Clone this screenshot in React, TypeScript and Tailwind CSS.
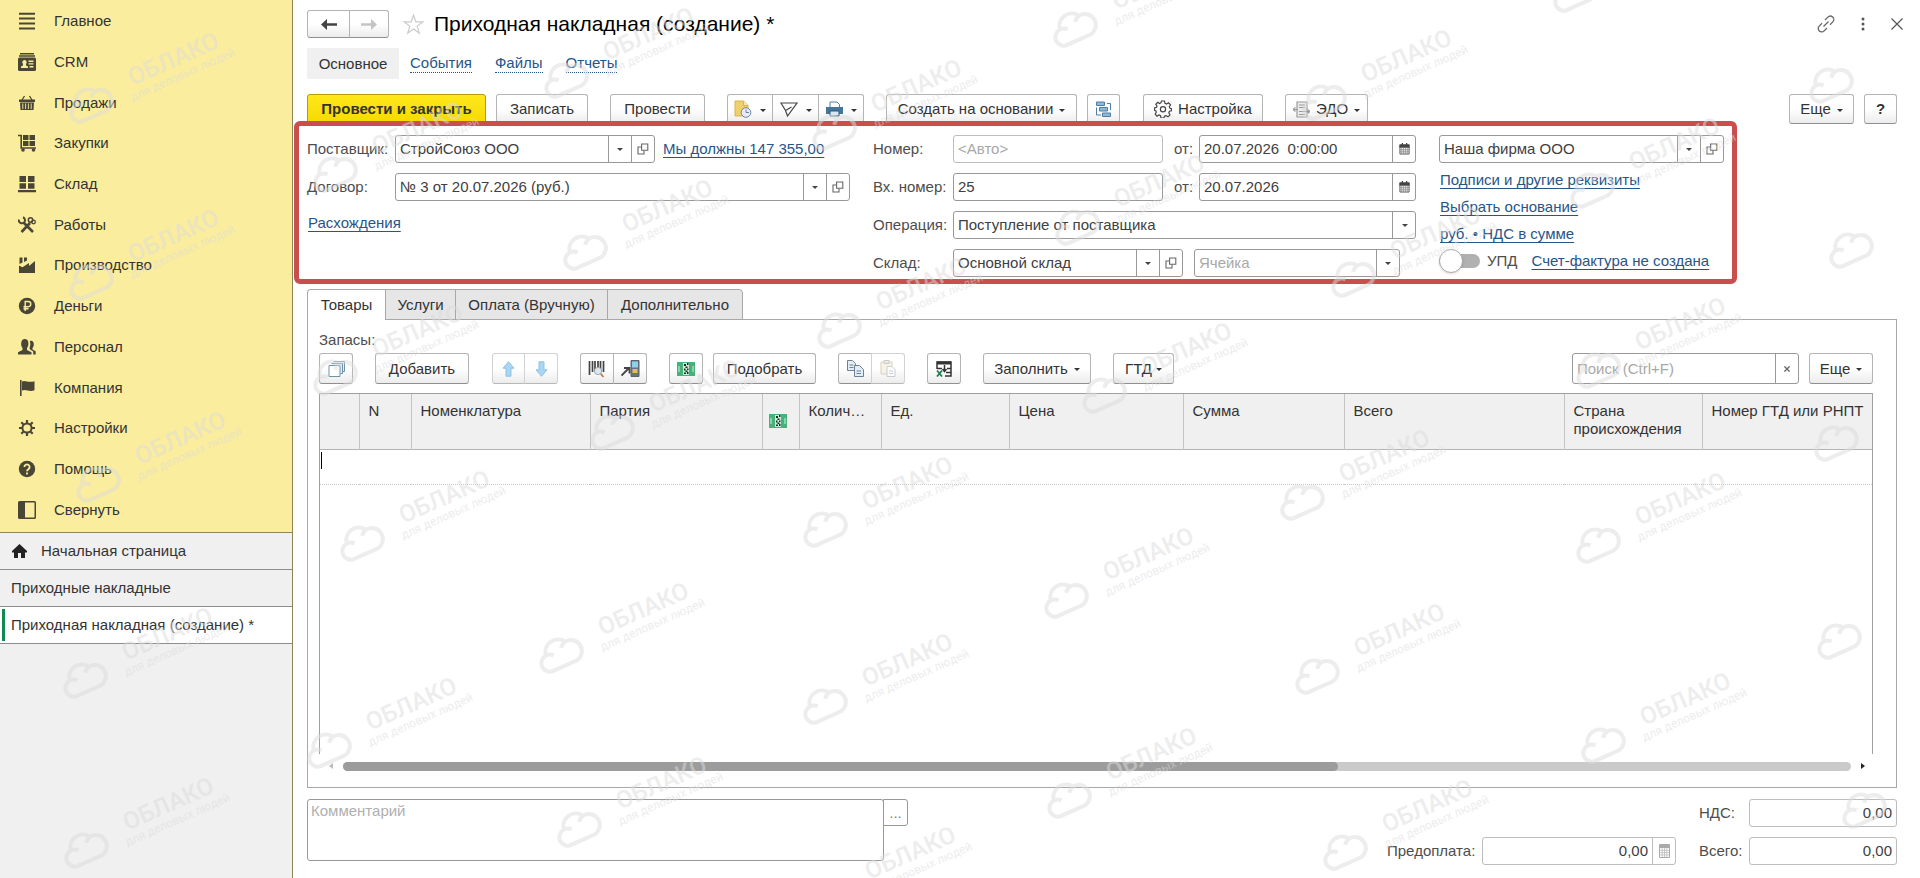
import type { ReactNode } from "react";
import clsx from "clsx";

// ---------- Icons ----------

const Caret = ({ className }: { className?: string }) => (
  <svg width="6" height="3" viewBox="0 0 6 3" className={clsx("shrink-0", className)}>
    <path d="M0 0h6L3 3z" fill="currentColor" />
  </svg>
);

const OpenIcon = () => (
  <svg width="12" height="12" viewBox="0 0 12 12" fill="none" stroke="#666" strokeWidth="1.1">
    <path d="M4.6 1h6.2v6.2H4.6z" />
    <path d="M4.4 4H1v7h6V7.4" />
  </svg>
);

const CalendarIcon = () => (
  <svg width="11" height="12" viewBox="0 0 12 13">
    <path d="M1 2h10v10H1z" fill="#fff" stroke="#555" />
    <path d="M.5 1.5h11V5H.5zM3 0h1.4v2H3zM7.6 0H9v2H7.6z" fill="#444" />
    <path d="M3 5v7M5 5v7M7 5v7M9 5v7M1 7.3h10M1 9.6h10" stroke="#777" strokeWidth=".7" />
  </svg>
);

const CalculatorIcon = () => (
  <svg width="11" height="14" viewBox="0 0 11 14">
    <path d="M.5.5h10v13H.5z" fill="#fff" stroke="#aaa" />
    <path d="M1 1h9v3H1z" fill="#aaa" />
    <path d="M3.2 4v9M5.5 4v9M7.8 4v9M1 6.3h9M1 8.6h9M1 10.9h9" stroke="#bbb" strokeWidth=".8" />
  </svg>
);

const MarkIcon = () => (
  <svg width="18" height="14" viewBox="0 0 18 14">
    <path d="M0 0h18v14H0z" fill="#45b27b" />
    <path d="M2 4v6M16 4v6" stroke="#9be0bd" strokeWidth="1.5" />
    <path d="M6 1h6v12H6z" fill="#c9ecd9" />
    <path
      d="M7 2h2v2H7zM10 1h1.5v2H10zM8.500 4.500h2v1.500h-2zM7 6.500h1.500v2H7zM10 6.500h1.500v1.500H10zM8.500 8.500h2v1.500h-2zM7 10.500h2V12H7zM10 10h1.500v2H10z"
      fill="#12301f"
    />
  </svg>
);

const menuIcons: Record<string, ReactNode> = {
  main: <path d="M1 1.700h16M1 6.600h16M1 11.500h16M1 16.400h16" stroke="currentColor" strokeWidth="2" />,
  crm: (
    <>
      <path d="M2 .8h14M1 3h16" stroke="currentColor" strokeWidth="1.400" />
      <rect y="4.500" width="18" height="13.500" rx="1.500" />
      <path
        d="M3 15v-1.500l2-1V11a2.200 2.200 0 1 1 3 0v1.500l2 1V15zM10.500 7.500h5v1.400h-5zM10.500 10.200h5v1.400h-5zM11.500 13h4v1.400h-4z"
        fill="#fbed9e"
      />
    </>
  ),
  sales: (
    <>
      <path d="M4 6 6.500 2M14 6l-2.500-4" stroke="currentColor" strokeWidth="1.300" />
      <path d="M1 5.500h16V8H1zM2 8.500h14L15.500 16h-13z" />
      <path d="M4.800 9.500v5.500M7.600 9.500v5.500M10.400 9.500v5.500M13.200 9.500v5.500" stroke="#fbed9e" strokeWidth=".9" />
    </>
  ),
  purchases: (
    <>
      <path d="M0 1.500h3.200V14H18" fill="none" stroke="currentColor" strokeWidth="1.600" />
      <path d="M5 1h5.500v5H5zM11.500 1H17v5h-5.500zM5 7h5.500v5H5zM11.500 7H17v5h-5.500z" />
      <circle cx="5" cy="16" r="1.800" />
      <circle cx="15.500" cy="16" r="1.800" />
    </>
  ),
  stock: <path d="M1.500 1H8v6H1.500zM10 1h6.500v6H10zM1.500 8.200H8v5.600H1.500zM10 8.200h6.500v5.600H10zM0 15h18v2.200H0z" />,
  works: (
    <>
      <path d="M5.500 6.500 15 16M12 7 3.500 16" stroke="currentColor" strokeWidth="2.600" />
      <path d="M.8 3.500a3.200 3.200 0 0 0 5.200 3 3.200 3.200 0 0 0-1-5.300" fill="none" stroke="currentColor" strokeWidth="2" />
      <circle cx="12.500" cy="4" r="2.200" fill="none" stroke="currentColor" strokeWidth="1.500" />
      <circle cx="15.500" cy="6" r="1.800" fill="none" stroke="currentColor" strokeWidth="1.300" />
    </>
  ),
  production: <path d="M1 17V9.500l3.500 1.800L11 7v3l6-5v12zM1.500 1.500h3v5l-3 1.500zM6 1.500h3v3L6 6z" />,
  money: (
    <>
      <circle cx="9" cy="9" r="8.200" />
      <path d="M7.200 14V4.500h3a2.500 2.500 0 0 1 0 5.200H5.500M5.500 11.800h5" fill="none" stroke="#fbed9e" strokeWidth="1.400" />
    </>
  ),
  staff: (
    <>
      <path d="M0 16.500v-2.300l4.500-2.200V10C3.200 8.500 3 6.500 3.300 4.200 3.700 2 5 1 6.800 1s3.200 1 3.500 3.200c.3 2.300 0 4.300-1.300 5.800v2l4.500 2.200v2.300z" />
      <path d="M11.800 3c2.400-.7 4 .6 4 3.200 0 1.700-.5 3-1.300 3.800v1.500l3.200 1.700v3.300h-2.500v-3l-3.500-2.300V9.200c.8-1.800.9-4 .1-6.200z" />
    </>
  ),
  company: <path d="M2 1h1.600v16H2zM4 2.500c3-2 6 1.800 12.500-.3v9C11 13.500 8 9.500 4 11.500z" />,
  settings: (
    <>
      <circle cx="9" cy="9" r="4.600" fill="none" stroke="currentColor" strokeWidth="2" />
      <path
        d="M9 1v3M9 14v3M1 9h3M14 9h3M3.300 3.300l2 2M12.700 12.700l2 2M3.300 14.700l2-2M12.700 5.300l2-2"
        stroke="currentColor"
        strokeWidth="2.200"
      />
    </>
  ),
  help: (
    <>
      <circle cx="9" cy="9" r="8.200" />
      <path d="M6.400 7a2.600 2.600 0 1 1 4 2.200c-1 .7-1.400 1-1.400 2M9 12.600v1.800" fill="none" stroke="#fbed9e" strokeWidth="1.800" />
    </>
  ),
  collapse: <path d="M1.500 0h15A1.500 1.500 0 0 1 18 1.500v15a1.500 1.500 0 0 1-1.500 1.500h-15A1.500 1.500 0 0 1 0 16.500v-15A1.500 1.500 0 0 1 1.500 0zM7 1.500v15h9.500v-15z" />,
};

// ---------- Data ----------

const menu = [
  { icon: "main", title: "Главное" },
  { icon: "crm", title: "CRM" },
  { icon: "sales", title: "Продажи" },
  { icon: "purchases", title: "Закупки" },
  { icon: "stock", title: "Склад" },
  { icon: "works", title: "Работы" },
  { icon: "production", title: "Производство" },
  { icon: "money", title: "Деньги" },
  { icon: "staff", title: "Персонал" },
  { icon: "company", title: "Компания" },
  { icon: "settings", title: "Настройки" },
  { icon: "help", title: "Помощь" },
  { icon: "collapse", title: "Свернуть" },
];

const columns: { title: ReactNode; width: string }[] = [
  { title: "", width: "w-[39px]" },
  { title: "N", width: "w-[52px]" },
  { title: "Номенклатура", width: "w-[179px]" },
  { title: "Партия", width: "w-[172px]" },
  { title: <MarkIcon />, width: "w-[37px]" },
  { title: "Колич…", width: "w-[82px]" },
  { title: "Ед.", width: "w-[128px]" },
  { title: "Цена", width: "w-[174px]" },
  { title: "Сумма", width: "w-[161px]" },
  { title: "Всего", width: "w-[220px]" },
  { title: "Страна происхождения", width: "w-[138px]" },
  { title: "Номер ГТД или РНПТ", width: "w-auto" },
];

// centre of the cloud; the ones at the right edge come without the text
const stamps: { x: number; y: number; bare?: boolean }[] = [
  { x: 89, y: 103 },
  { x: 89, y: 280 },
  { x: 96, y: 482 },
  { x: 83, y: 678 },
  { x: 84, y: 848 },
  { x: 564, y: 78 },
  { x: 832, y: 130 },
  { x: 1073, y: 27 },
  { x: 1322, y: 100 },
  { x: 1573, y: -8 },
  { x: 333, y: 172 },
  { x: 583, y: 250 },
  { x: 1075, y: 225 },
  { x: 1351, y: 277 },
  { x: 1590, y: 188 },
  { x: 333, y: 375 },
  { x: 610, y: 430 },
  { x: 837, y: 328 },
  { x: 1102, y: 393 },
  { x: 1300, y: 500 },
  { x: 1596, y: 368 },
  { x: 1596, y: 543 },
  { x: 360, y: 541 },
  { x: 823, y: 527 },
  { x: 1064, y: 598 },
  { x: 559, y: 653 },
  { x: 1315, y: 674 },
  { x: 823, y: 704 },
  { x: 327, y: 748 },
  { x: 1067, y: 798 },
  { x: 1601, y: 743 },
  { x: 577, y: 827 },
  { x: 1343, y: 850 },
  { x: 826, y: 897 },
  { x: 1829, y: 83, bare: true },
  { x: 1849, y: 248, bare: true },
  { x: 1834, y: 441, bare: true },
  { x: 1837, y: 639, bare: true },
  { x: 1862, y: 808, bare: true },
];

// ---------- Controls ----------

const buttonBase =
  "flex items-center justify-center gap-1 border border-[#b4b4b4] border-b-[#8f8f8f] bg-linear-to-b from-white from-50% to-[#ececec] text-[#333] whitespace-nowrap";

type ButtonProps = {
  children: ReactNode;
  className?: string;
  label?: string;
  caret?: boolean;
  disabled?: boolean;
};

const Button = ({ children, className, label, caret, disabled }: ButtonProps) => (
  <button
    type="button"
    aria-label={label}
    disabled={disabled}
    className={clsx(buttonBase, !className?.includes("rounded") && "rounded-[3px]", className)}
  >
    {children}
    {caret && <Caret className="mt-0.5" />}
  </button>
);

const Link = ({ children, className }: { children: ReactNode; className?: string }) => (
  <a href="#" className={clsx("whitespace-nowrap text-[#27558a] underline underline-offset-3", className)}>
    {children}
  </a>
);

type FieldProps = {
  id: string;
  label: string;
  value?: string;
  placeholder?: string;
  className?: string;
  muted?: boolean;
  right?: boolean;
  buttons?: ("drop" | "open" | "date" | "calc")[];
};

const fieldIcons = {
  drop: { label: "Выбрать", icon: <Caret className="text-[#444]" /> },
  open: { label: "Открыть", icon: <OpenIcon /> },
  date: { label: "Календарь", icon: <CalendarIcon /> },
  calc: { label: "Калькулятор", icon: <CalculatorIcon /> },
};

// Input with small buttons glued to its right side
const Field = ({ id, label, value, placeholder, className, muted, right, buttons = [] }: FieldProps) => (
  <div
    className={clsx(
      "flex h-7 overflow-hidden rounded-[3px] border bg-white",
      muted ? "border-[#bdbdbd]" : "border-[#999]",
      className
    )}
  >
    <input
      id={id}
      aria-label={label}
      defaultValue={value}
      placeholder={placeholder}
      className={clsx("w-0 min-w-0 flex-1 px-1 text-[#404040] outline-none placeholder:text-[#a8a8a8]", right && "text-right")}
    />
    {buttons.map((b) => (
      <button
        key={b}
        type="button"
        aria-label={fieldIcons[b].label}
        className={clsx(
          "flex w-[23px] shrink-0 items-center justify-center border-l",
          muted ? "border-[#bdbdbd]" : "border-[#999]"
        )}
      >
        {fieldIcons[b].icon}
      </button>
    ))}
  </div>
);

const Label = ({ htmlFor, children, className }: { htmlFor: string; children: ReactNode; className?: string }) => (
  <label htmlFor={htmlFor} className={clsx("shrink-0 whitespace-nowrap text-[#4d4d4d]", className)}>
    {children}
  </label>
);

// ---------- Sections ----------

const Sidebar = () => (
  <aside className="flex w-[293px] shrink-0 flex-col border-r border-[#8d8659] bg-[#f0f0f0] text-[#333]">
    <nav className="grid h-[533px] auto-rows-fr border-b border-[#8d8659] bg-[#fbed9e] pt-px pb-0.5">
      {menu.map((item) => (
        <a key={item.icon} href="#" className="flex items-center gap-[18px] pl-[18px]">
          <svg width="18" height="18" viewBox="0 0 18 18" fill="currentColor" className="text-[#4a4635]">
            {menuIcons[item.icon]}
          </svg>
          {item.title}
        </a>
      ))}
    </nav>
    <a href="#" className="flex h-[37px] items-center gap-3.5 border-b border-[#8d8d8d] pl-3">
      <svg width="15" height="14" viewBox="0 0 15 14" fill="#222">
        <path d="M7.500 0 15 7v1.500h-2V14H9V9H6v5H2V8.500H0V7z" />
      </svg>
      Начальная страница
    </a>
    <a href="#" className="flex h-[37px] items-center border-b border-[#8d8d8d] pl-[11px]">
      Приходные накладные
    </a>
    <a href="#" className="flex h-[37px] items-center border-b border-[#8d8d8d] bg-white py-0.5 pl-0.5">
      <span className="mr-1.5 h-full w-[3px] bg-[#0f8a51]" />
      Приходная накладная (создание) *
    </a>
  </aside>
);

const TitleBar = () => (
  <div className="flex items-center pt-2.5">
    <Button label="Назад" className="h-7 w-[43px] rounded-l-[3px]">
      <svg width="16" height="11" viewBox="0 0 16 11">
        <path d="M0 5.500 6 0v4.200h10v2.600H6V11z" fill="#444" />
      </svg>
    </Button>
    <Button label="Вперед" className="-ml-px h-7 w-10 rounded-r-[3px]" disabled>
      <svg width="16" height="11" viewBox="0 0 16 11">
        <path d="M16 5.500 10 0v4.200H0v2.600h10V11z" fill="#c4c4c4" />
      </svg>
    </Button>
    <button type="button" aria-label="В избранное" className="ml-3.5">
      <svg width="21" height="21" viewBox="0 0 21 21" fill="none" stroke="#ccc" strokeWidth="1.200">
        <path d="m10.500 1 2.300 6.800h7l-5.600 4.300 2.100 7-5.800-4.200-5.800 4.200 2.100-7L1.200 7.800h7z" />
      </svg>
    </button>
    <h1 className="ml-2.5 text-[21px] leading-7 text-black">Приходная накладная (создание) *</h1>
    <div className="-mr-1.5 ml-auto flex items-center gap-[22px]">
      <button type="button" aria-label="Получить ссылку">
        <svg width="18" height="18" viewBox="0 0 18 18" fill="none" stroke="#666" strokeWidth="1.300">
          <path d="m8 5 2.800-2.900a3.400 3.400 0 0 1 5 4.800L13 9.800M10 13l-2.800 2.900a3.400 3.400 0 0 1-5-4.800L5 8.200M6.500 11.500l5-5" />
        </svg>
      </button>
      <button type="button" aria-label="Дополнительно" className="px-1">
        <svg width="4" height="14" viewBox="0 0 4 14" fill="#555">
          <circle cx="2" cy="2" r="1.500" />
          <circle cx="2" cy="7" r="1.500" />
          <circle cx="2" cy="12" r="1.500" />
        </svg>
      </button>
      <button type="button" aria-label="Закрыть">
        <svg width="12" height="12" viewBox="0 0 12 12" stroke="#555" strokeWidth="1.200">
          <path d="m.5.5 11 11M11.500.5l-11 11" />
        </svg>
      </button>
    </div>
  </div>
);

const CommandBar = () => (
  <div className="mt-[15px] flex h-[30px] items-stretch">
    <button
      type="button"
      className="w-[179px] rounded-[3px] border border-[#b89b00] bg-linear-to-b from-[#ffe81a] to-[#f7d900] font-bold whitespace-nowrap text-[#333]"
    >
      Провести и закрыть
    </button>
    <Button className="ml-2.5 w-[92px]">Записать</Button>
    <Button className="ml-[22px] w-[95px]">Провести</Button>
    <div className="ml-[22px] flex">
      <Button label="Присоединенные файлы" className="w-[46px] gap-2 rounded-l-[3px]" caret>
        <svg width="18" height="18" viewBox="0 0 18 18">
          <path d="M1 1h8.500L14 5.500V16H1z" fill="#f0cf6e" stroke="#d9b44a" />
          <path d="M9.500 1v4.500H14" fill="#fbe9b0" stroke="#d9b44a" />
          <circle cx="12" cy="12.500" r="4.800" fill="#e8edf5" stroke="#6f83a5" />
          <path d="M12 9.500v3h3" fill="none" stroke="#6f83a5" />
        </svg>
      </Button>
      <Button label="Отправить" className="-ml-px w-[47px] gap-2 rounded-none" caret>
        <svg width="18" height="15" viewBox="0 0 18 15" fill="none" stroke="#444" strokeWidth="1.200">
          <path d="M1 1h16L7.500 14 5.500 8.500zM5.500 8.500 11.500 5" />
        </svg>
      </Button>
      <Button label="Печать" className="-ml-px w-[46px] gap-2 rounded-r-[3px]" caret>
        <svg width="17" height="16" viewBox="0 0 17 16">
          <path d="M4 6V1h7l2.500 2.500V6" fill="#fff" stroke="#4d7ea3" />
          <path d="M0 6h17v7H0z" fill="#44759b" />
          <path d="M4 10h9v5H4z" fill="#dbe8f1" stroke="#2f5878" />
        </svg>
      </Button>
    </div>
    <Button className="ml-[22px] w-[191px] gap-1.5" caret>
      Создать на основании
    </Button>
    <Button label="Структура подчиненности" className="ml-2.5 w-[33px]">
      <svg width="17" height="17" viewBox="0 0 17 17" fill="#8fb8d8" stroke="#4d7ea3">
        <path d="M1.500 1h8v3.500h-8zM4.500 6.500h8V10h-8zM7.500 12h8v3.500h-8z" />
        <path d="M12 2.500h3.500V9M1.500 6.500v7.500H6" fill="none" />
      </svg>
    </Button>
    <Button className="ml-[23px] w-[120px] gap-1.5">
      <svg width="18" height="18" viewBox="0 0 18 18" fill="none" stroke="#444" strokeWidth="1.200">
        <path d="M7.500 1h3l.5 2.300 1.500.7 2-1.200 2 2-1.200 2 .7 1.500 1.500.4v2l-2 .6-.7 1.500 1.200 2-2 2-2-1.200-1.500.6-.5 1.800h-3L6.500 15.700 5 15l-2 1.200-1.800-2L2.300 12l-.6-1.300-1.200-.4V8l1.800-.6L3 6 1.800 4.300l2-2L5.500 3.500l1.400-.6z" />
        <circle cx="9" cy="9.200" r="2.600" />
      </svg>
      Настройка
    </Button>
    <Button className="ml-[22px] w-[83px] gap-1.5" caret>
      <svg width="17" height="17" viewBox="0 0 17 17" stroke="#9a9a9a" strokeWidth="1.200">
        <path d="M4 1h10v15H4z" fill="#ececec" />
        <path d="M6 4h6M6 6.500h6M6 13.500h6M0 8.500h5M0 8.500 2.500 6.500M0 8.500l2.500 2M17 10.500H6M17 10.500l-2.500-2M17 10.500l-2.500 2" fill="none" />
      </svg>
      ЭДО
    </Button>
    <Button className="ml-auto w-[65px] gap-1.5" caret>
      Еще
    </Button>
    <Button label="Справка" className="ml-2.5 w-[33px] font-bold">
      ?
    </Button>
  </div>
);

const DocumentHeader = () => (
  <section className="relative -mt-[3px] -ml-[13px] flex w-fit gap-[23px] rounded-md border-[5px] border-[#c94f4f] pt-[9px] pr-2 pb-0.5 pl-2">
    <div className="flex w-[543px] flex-col gap-2.5">
      <div className="flex items-center">
        <Label htmlFor="supplier" className="w-[88px]">Поставщик:</Label>
        <Field id="supplier" label="Поставщик" value="СтройСоюз ООО" className="w-[260px]" buttons={["drop", "open"]} />
        <Link className="ml-2">Мы должны 147 355,00</Link>
      </div>
      <div className="flex items-center">
        <Label htmlFor="contract" className="w-[88px]">Договор:</Label>
        <Field id="contract" label="Договор" value="№ 3 от 20.07.2026 (руб.)" className="flex-1" buttons={["drop", "open"]} />
      </div>
      <Link className="w-fit pl-px leading-6 text-[#163a66]">Расхождения</Link>
    </div>

    <div className="flex w-[543px] flex-col gap-2.5">
      <div className="flex items-center">
        <Label htmlFor="number" className="w-20">Номер:</Label>
        <Field id="number" label="Номер" placeholder="<Авто>" className="w-[210px]" muted />
        <Label htmlFor="date" className="ml-[11px] w-[25px]">от:</Label>
        <Field id="date" label="Дата" value="20.07.2026  0:00:00" className="flex-1" buttons={["date"]} />
      </div>
      <div className="flex items-center">
        <Label htmlFor="in-number" className="w-20">Вх. номер:</Label>
        <Field id="in-number" label="Входящий номер" value="25" className="w-[210px]" />
        <Label htmlFor="in-date" className="ml-[11px] w-[25px]">от:</Label>
        <Field id="in-date" label="Входящая дата" value="20.07.2026" className="flex-1" buttons={["date"]} />
      </div>
      <div className="flex items-center">
        <Label htmlFor="operation" className="w-20">Операция:</Label>
        <div className="relative h-7 flex-1">
          <select
            id="operation"
            className="h-full w-full appearance-none rounded-[3px] border border-[#999] bg-white px-1 text-[#404040]"
          >
            <option>Поступление от поставщика</option>
          </select>
          <span className="pointer-events-none absolute inset-y-0 right-0 flex w-6 items-center justify-center border-l border-[#999]">
            <Caret className="text-[#444]" />
          </span>
        </div>
      </div>
      <div className="flex items-center">
        <Label htmlFor="warehouse" className="w-20">Склад:</Label>
        <Field id="warehouse" label="Склад" value="Основной склад" className="w-[230px]" buttons={["drop", "open"]} />
        <Field id="cell" label="Ячейка" placeholder="Ячейка" className="ml-[11px] w-[206px]" buttons={["drop"]} />
      </div>
    </div>

    <div className="flex w-[285px] flex-col">
      <Field id="company" label="Организация" value="Наша фирма ООО" buttons={["drop", "open"]} />
      <div className="mt-[3px] flex flex-col items-start pl-px leading-[27px]">
        <Link>Подписи и другие реквизиты</Link>
        <Link>Выбрать основание</Link>
        <Link>руб. • НДС в сумме</Link>
      </div>
      <div className="flex h-7 items-center">
        <input
          id="upd"
          type="checkbox"
          className="relative mr-[7px] h-3.5 w-[41px] appearance-none rounded-full bg-[#b0b0b0] before:absolute before:-top-[5px] before:left-0 before:size-6 before:rounded-full before:border before:border-[#aaa] before:bg-white before:shadow-sm"
        />
        <Label htmlFor="upd">УПД</Label>
        <Link className="ml-3.5">Счет-фактура не создана</Link>
      </div>
    </div>
  </section>
);

const Tabs = () => (
  <div role="tablist" className="relative -mb-px flex h-[31px] w-fit text-[#333]">
    <button type="button" role="tab" aria-selected="true" className="w-[79px] rounded-tl-[4px] border border-b-0 border-[#a8a8a8] bg-white">
      Товары
    </button>
    <button type="button" role="tab" aria-selected="false" className="-ml-px w-[71px] border border-[#a8a8a8] bg-[#e6e6e6]">
      Услуги
    </button>
    <button type="button" role="tab" aria-selected="false" className="-ml-px w-[153px] border border-[#a8a8a8] bg-[#e6e6e6]">
      Оплата (Вручную)
    </button>
    <button type="button" role="tab" aria-selected="false" className="-ml-px w-[136px] rounded-tr-[4px] border border-[#a8a8a8] bg-[#e6e6e6]">
      Дополнительно
    </button>
  </div>
);

const GoodsToolbar = () => (
  <div className="mt-[3px] flex h-[31px] items-stretch">
    <Button label="Список" className="w-[34px]">
      <svg width="17" height="16" viewBox="0 0 17 16" fill="#e6eef2" stroke="#6d93a8">
        <path d="M5.500.5h11v10h-2M3.500 2.500h11v10h-2" />
        <path d="M1 4.500h11v11H1z" fill="#fff" />
      </svg>
    </Button>
    <Button className="ml-[22px] w-[94px]">Добавить</Button>
    <div className="ml-[23px] flex">
      <Button label="Вверх" className="w-[33px] rounded-l-[3px] border-[#d2d2d2] border-b-[#b8b8b8]" disabled>
        <svg width="13" height="16" viewBox="0 0 13 16" fill="#a9d6f2" stroke="#8cc3e6">
          <path d="m6.500.7 5.500 6.500H9v8H4v-8H1z" />
        </svg>
      </Button>
      <Button label="Вниз" className="-ml-px w-[34px] rounded-r-[3px] border-[#d2d2d2] border-b-[#b8b8b8]" disabled>
        <svg width="13" height="16" viewBox="0 0 13 16" fill="#a9d6f2" stroke="#8cc3e6">
          <path d="m6.500 15.300 5.500-6.500H9v-8H4v8H1z" />
        </svg>
      </Button>
    </div>
    <div className="ml-[22px] flex">
      <Button label="Штрихкод" className="w-[34px] rounded-l-[3px]">
        <svg width="18" height="18" viewBox="0 0 18 18">
          <path d="M1.500 1v14M4.500 1v11M7 1v11M10 1v10M12.500 1v10M15.500 1v11" stroke="#444" strokeWidth="1.700" />
          <circle cx="10" cy="11" r="3.600" fill="#dfe8f0" stroke="#9aa6b2" />
          <path d="m12.800 13.800 2.700 3.200" stroke="#c27c4a" strokeWidth="1.800" />
        </svg>
      </Button>
      <Button label="Терминал сбора данных" className="-ml-px w-[34px] rounded-r-[3px]">
        <svg width="19" height="17" viewBox="0 0 19 17">
          <path d="M10 .5h8v16h-8z" fill="#6b747d" stroke="#5a636c" />
          <path d="M11 1.500h6v6h-6z" fill="#8fd0f0" />
          <path d="M11.500 9h5v4h-5z" fill="#e0c24a" />
          <path d="m.5 15.500 7-7M3 8h5.500v5.500" fill="none" stroke="#444" strokeWidth="1.800" />
        </svg>
      </Button>
    </div>
    <Button label="Маркировка" className="ml-[22px] w-[34px]">
      <MarkIcon />
    </Button>
    <Button className="ml-2.5 w-[103px]">Подобрать</Button>
    <div className="ml-[22px] flex">
      <Button label="Копировать строки" className="w-[34px] rounded-l-[3px]">
        <svg width="17" height="17" viewBox="0 0 17 17" fill="#e4edf5" stroke="#6b8196">
          <path d="M.5.5h5l3 3v7h-8zM2.500 5h4M2.500 7.500h4" />
          <path d="M7.500 5.500h5l4 4v7h-9zM9.500 11h4.500M9.500 13.500h4.500" />
        </svg>
      </Button>
      <Button label="Вставить строки" className="-ml-px w-[34px] rounded-r-[3px] border-[#d2d2d2] border-b-[#b8b8b8]" disabled>
        <svg width="16" height="17" viewBox="0 0 16 17" opacity=".6">
          <path d="M1 2h11v12H1z" fill="#f4ead8" stroke="#c8b48c" />
          <path d="M4 .5h5v3H4z" fill="#ddd" stroke="#aaa" />
          <path d="M7 6.500h5l3 3v7H7zM9 11h4M9 13.500h4" fill="#fff" stroke="#a5b0ba" />
        </svg>
      </Button>
    </div>
    <Button label="Загрузить из таблицы" className="ml-[22px] w-[34px]">
      <svg width="16" height="16" viewBox="0 0 16 16" fill="none" stroke="#333" strokeWidth="1.500">
        <path d="M1 8V1h14v14H9M6 7.500H1M11 7.500h4M10 11.500h5" />
        <path d="M1 2h14" strokeWidth="3" />
        <path d="M8.500 4v6M6.500 8l2 2.500 2-2.500" />
        <path d="m1 9.500 5 6M6 9.500l-5 6" stroke="#1e8050" strokeWidth="1.800" />
      </svg>
    </Button>
    <Button className="ml-[22px] w-[108px] gap-1.5" caret>
      Заполнить
    </Button>
    <Button className="ml-[22px] w-[61px]" caret>
      ГТД
    </Button>
    <div className="ml-auto flex w-[227px] overflow-hidden rounded-[3px] border border-[#999] bg-white">
      <input
        type="search"
        aria-label="Поиск"
        placeholder="Поиск (Ctrl+F)"
        className="w-0 min-w-0 flex-1 px-1 outline-none placeholder:text-[#a8a8a8]"
      />
      <button type="button" aria-label="Очистить" className="flex w-[23px] items-center justify-center border-l border-[#999]">
        <svg width="6" height="6" viewBox="0 0 7 7" stroke="#666" strokeWidth="1.500">
          <path d="m.5.5 6 6M6.500.5l-6 6" />
        </svg>
      </button>
    </div>
    <Button className="ml-2.5 w-16 gap-1.5" caret>
      Еще
    </Button>
  </div>
);

const GoodsTable = () => (
  <>
    <div className="mt-[9px] flex-1 overflow-hidden border-x border-t border-[#a0a0a0]">
      <table className="w-full table-fixed border-collapse text-left text-[#333]">
        <thead>
          <tr className="h-[55px] border-b border-[#b4b4b4] bg-[#f0f0f0]">
            {columns.map((col, i) => (
              <th
                key={i}
                scope="col"
                className={clsx(
                  "overflow-hidden border-r border-[#c4c4c4] align-top font-normal leading-[18px] last:border-r-0",
                  i === 4 ? "pt-5 pl-1.5" : "pt-2 pl-[9px]",
                  col.width
                )}
              >
                {col.title}
              </th>
            ))}
          </tr>
        </thead>
        <tbody>
          <tr className="h-[35px] border-b border-dotted border-[#c8c8c8]">
            <td className="pt-0.5 pl-px align-top" colSpan={columns.length}>
              <span className="block h-[17px] w-px bg-black" />
            </td>
          </tr>
        </tbody>
      </table>
    </div>
    <div className="mt-[7px] mb-4 flex h-2.5 items-center pr-2 pl-2.5">
      <svg width="4" height="6" viewBox="0 0 4 6" fill="#bbb">
        <path d="M4 0v6L0 3z" />
      </svg>
      <div className="mx-2.5 h-[9px] flex-1 rounded-full bg-[#cacaca]">
        <div className="h-full w-[66%] rounded-full bg-[#9c9c9c]" />
      </div>
      <svg width="4" height="6" viewBox="0 0 4 6" fill="#222">
        <path d="M0 0v6l4-3z" />
      </svg>
    </div>
  </>
);

const Footer = () => (
  <div className="mt-[11px] flex items-start justify-between pb-[13px]">
    <div className="flex items-start">
      <textarea
        aria-label="Комментарий"
        placeholder="Комментарий"
        className="h-[62px] w-[577px] resize-none rounded-[3px] border border-[#999] px-[3px] pt-px leading-5 outline-none placeholder:text-[#b0b0b0]"
      />
      <button type="button" aria-label="Открыть комментарий" className="-ml-px h-[27px] w-[25px] rounded-r-[3px] border border-[#999] text-[#888]">
        ...
      </button>
    </div>
    <div className="grid grid-cols-[95px_194px_23px_50px_148px] items-center gap-y-2.5">
      <Label htmlFor="vat" className="col-start-4">НДС:</Label>
      <Field id="vat" label="НДС" value="0,00" muted right />
      <Label htmlFor="prepay">Предоплата:</Label>
      <Field id="prepay" label="Предоплата" value="0,00" muted right buttons={["calc"]} />
      <Label htmlFor="total" className="col-start-4">Всего:</Label>
      <Field id="total" label="Всего" value="0,00" muted right />
    </div>
  </div>
);

// Brand stamps spread over the whole window
const Stamps = () => (
  <div aria-hidden="true" className="pointer-events-none absolute inset-0 overflow-hidden opacity-50">
    {stamps.map((s, i) => (
      <svg
        key={i}
        width="180"
        height="120"
        viewBox="-28 -80 180 120"
        className="absolute -mt-20 -ml-7 overflow-visible"
        style={{ left: s.x, top: s.y }}
      >
        <g transform="rotate(-24)">
          <g fill="none" stroke="#dcdcdd" strokeWidth="4" strokeLinejoin="round">
            <path d="M-12 14a8.500 8.500 0 0 1-1-17 12.500 12.500 0 0 1 23-5 11 11 0 0 1 3 22z" />
            <path d="M-13-3a9 9 0 0 1 7 3M10-8a11 11 0 0 0-6 4" />
          </g>
          {!s.bare && (
            <g fill="#dcdcdd" textAnchor="middle" className="font-[Roboto,sans-serif]">
              <text x="95" y="2" fontSize="24" fontWeight="500">
                ОБЛАКО
              </text>
              <text x="97" y="16" fontSize="12">
                для деловых людей
              </text>
            </g>
          )}
        </g>
      </svg>
    ))}
  </div>
);

export default function App() {
  return (
    <div className="relative flex min-h-screen bg-white font-['Liberation_Sans',Arial,sans-serif] text-[15px] leading-5">
      <Sidebar />
      <main className="flex min-w-0 flex-1 flex-col pr-[23px] pl-3.5">
        <TitleBar />
        <nav className="mt-2.5 flex h-[31px] items-center">
          <span className="flex h-full w-[92px] items-center justify-center bg-[#f0f0f0] text-[#333]">Основное</span>
          {["События", "Файлы", "Отчеты"].map((t, i) => (
            <a
              key={t}
              href="#"
              className={clsx("border-b border-dotted border-[#27558a] leading-[18px] text-[#27558a]", i ? "ml-[23px]" : "ml-[11px]")}
            >
              {t}
            </a>
          ))}
        </nav>
        <CommandBar />
        <DocumentHeader />
        <div className="mt-[5px] flex flex-1 flex-col">
          <Tabs />
          <div className="flex flex-1 flex-col border border-[#a8a8a8] pr-[23px] pl-[11px]">
            <p className="mt-2.5 text-[#4d4d4d]">Запасы:</p>
            <GoodsToolbar />
            <GoodsTable />
          </div>
        </div>
        <Footer />
      </main>
      <Stamps />
    </div>
  );
}
